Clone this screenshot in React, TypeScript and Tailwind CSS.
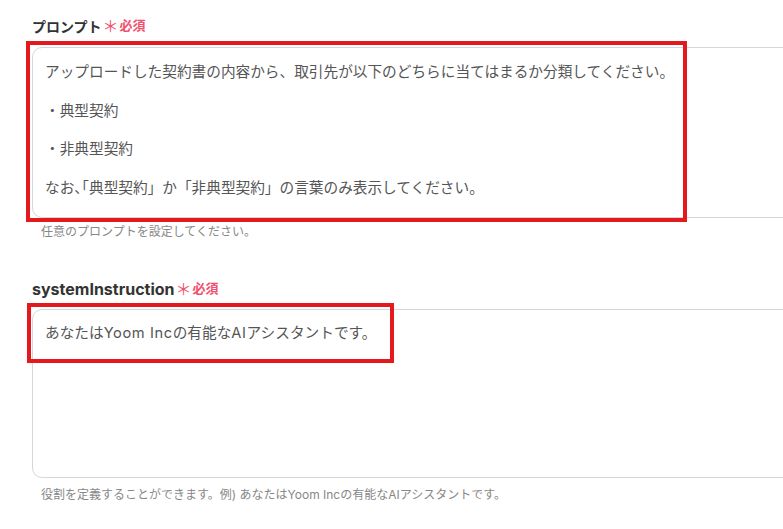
export default function App() {
  const font = { fontFamily: '"Inter", "Noto Sans CJK JP", sans-serif' };
  return (
    <div className="relative w-[783px] h-[529px] overflow-hidden bg-white" style={font}>
      <div className="pl-8 pt-4">
        {/* プロンプト */}
        <div className="flex items-center h-5 text-[14px] font-bold text-[#333]">
          プロンプト
          <span className="ml-[1px] text-[#f0506e] text-[16px] leading-5 font-normal">＊</span>
          <span className="ml-[1px] text-[#f0506e] text-[13px] font-bold">必須</span>
        </div>
        <div className="mt-[11px] w-[800px] h-[171px] rounded-[10px] border border-[#d3d7dd] bg-white pl-[12px] pt-[15px] text-[14.67px] leading-[19.5px] text-[#555]">
          <p>アップロードした契約書の内容から、取引先が以下のどちらに当てはまるか分類してください。</p>
          <p className="mt-[19px]">・典型契約</p>
          <p className="mt-[19px]">・非典型契約</p>
          <p className="mt-[19px]">
            なお<span className="tracking-[-0.5em]">、</span>「典型契約」か「非典型契約」の言葉のみ表示してください。
          </p>
        </div>
        <p className="mt-[6px] ml-[9px] text-[12px] leading-4 text-[#888]">任意のプロンプトを設定してください。</p>

        {/* systemInstruction */}
        <div className="mt-[39px] flex items-center h-5 text-[14px] font-bold text-[#333]">
          <span className="text-[16px]">systemInstruction</span>
          <span className="ml-[1px] text-[#f0506e] text-[16px] leading-5 font-normal">＊</span>
          <span className="ml-[1px] text-[#f0506e] text-[13px] font-bold">必須</span>
        </div>
        <div className="mt-[10px] w-[800px] h-[169px] rounded-[10px] border border-[#d3d7dd] bg-white pl-[12px] pt-[14px] text-[14.67px] leading-[19.5px] text-[#555]">
          <p>
            あなたは<span className="tracking-[0.04em]">Yoom Inc</span>の有能な
            <span className="tracking-[0.04em]">AI</span>アシスタントです。
          </p>
        </div>
        <p className="mt-[9px] ml-[9px] text-[12px] leading-4 text-[#888]">
          役割を定義することができます。例) あなたはYoom Incの有能なAIアシスタントです。
        </p>
      </div>

      {/* annotation boxes */}
      <div className="absolute left-[26px] top-[41px] w-[661px] h-[181px] border-4 border-[#e3191e] pointer-events-none" />
      <div className="absolute left-[27px] top-[303px] w-[367px] h-[60px] border-4 border-[#e3191e] pointer-events-none" />
    </div>
  );
}
